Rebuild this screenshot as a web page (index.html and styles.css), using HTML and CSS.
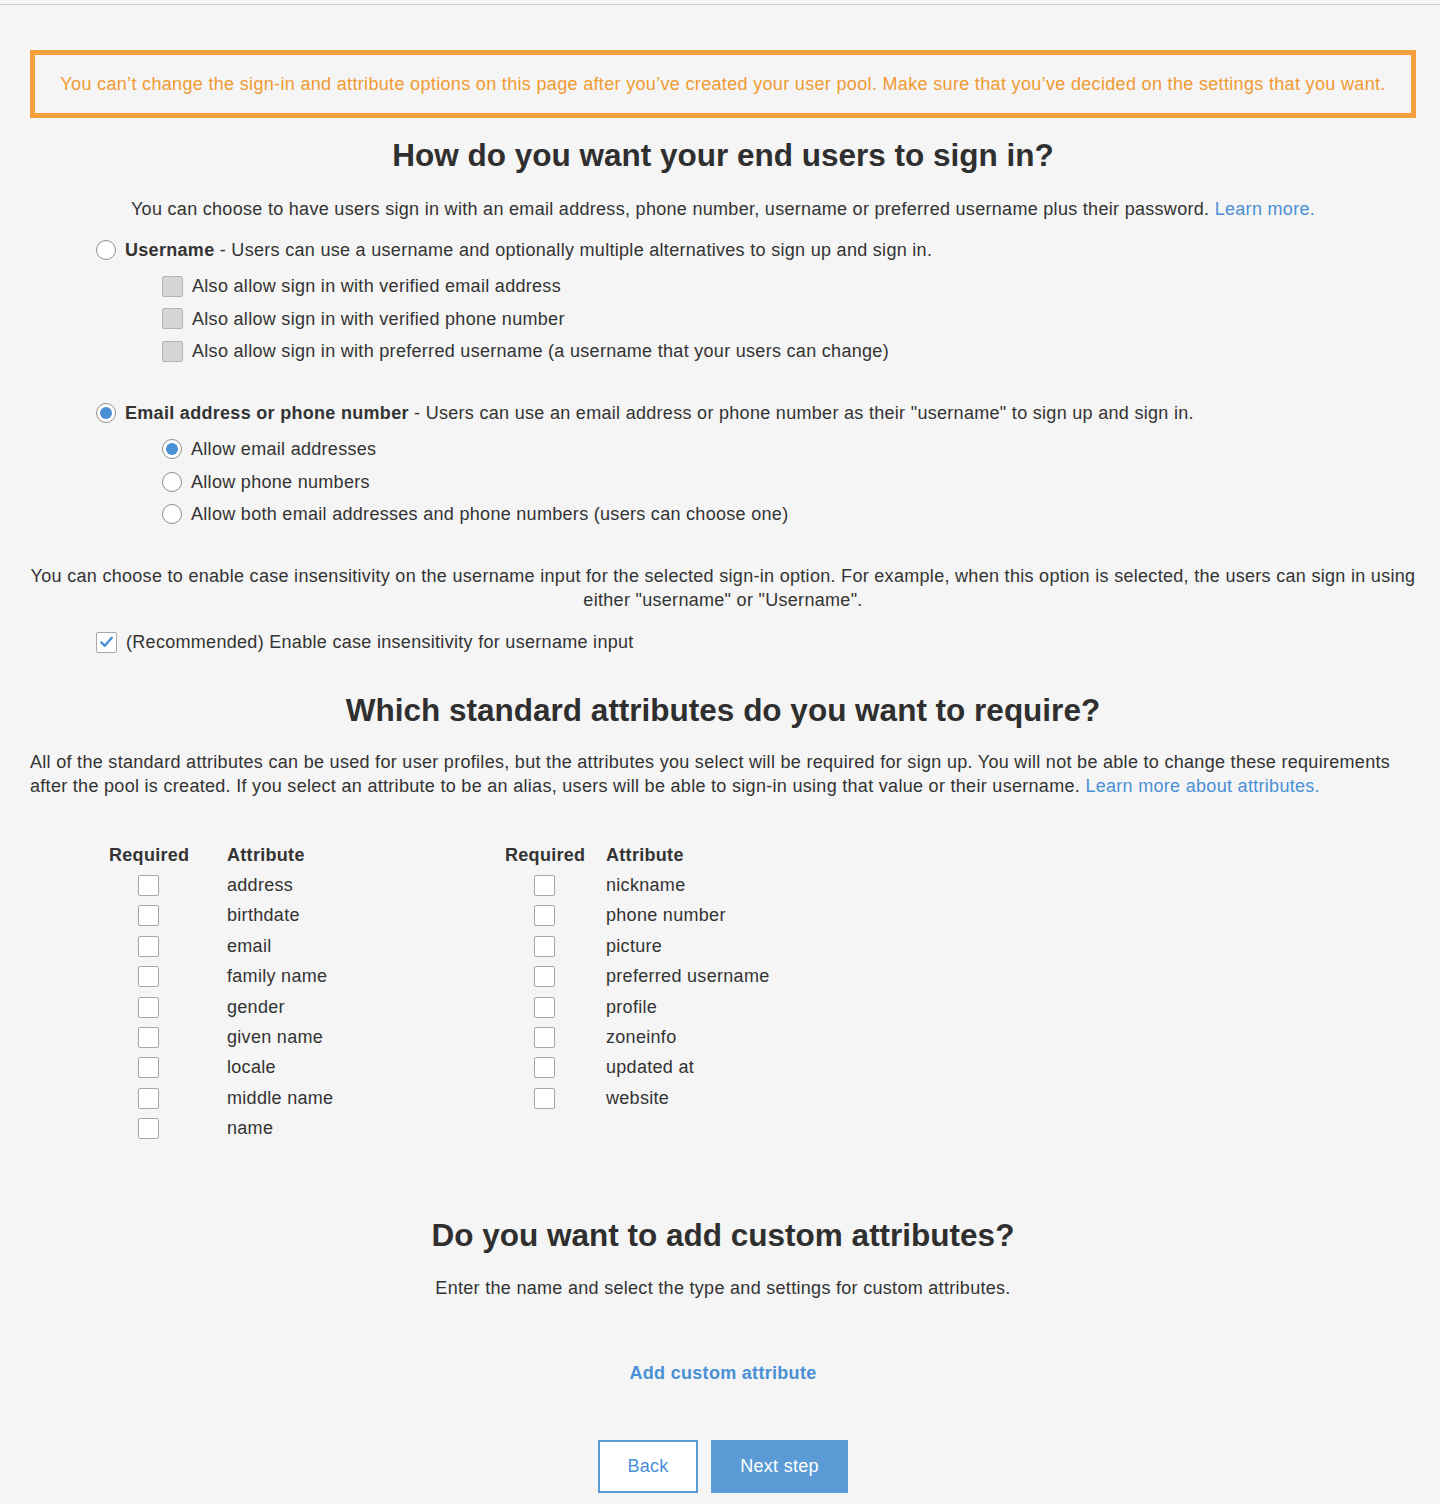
FILE: index.html
```html
<!DOCTYPE html>
<html lang="en">
<head>
<meta charset="utf-8">
<title>Attributes</title>
<link rel="stylesheet" href="styles.css">
</head>
<body>
<div class="topbar"></div>
<main class="page">
  <div class="warning">You can’t change the sign-in and attribute options on this page after you’ve created your user pool. Make sure that you’ve decided on the settings that you want.</div>

  <h2 class="heading h-signin">How do you want your end users to sign in?</h2>
  <p class="intro">You can choose to have users sign in with an email address, phone number, username or preferred username plus their password. <a class="link" href="#">Learn more.</a></p>

  <div class="option opt-username">
    <span class="radio"></span>
    <span><b>Username</b> - Users can use a username and optionally multiple alternatives to sign up and sign in.</span>
  </div>
  <div class="suboptions sub-username">
    <div class="option"><span class="check disabled"></span><span>Also allow sign in with verified email address</span></div>
    <div class="option"><span class="check disabled"></span><span>Also allow sign in with verified phone number</span></div>
    <div class="option"><span class="check disabled"></span><span>Also allow sign in with preferred username (a username that your users can change)</span></div>
  </div>

  <div class="option opt-email">
    <span class="radio checked"></span>
    <span><b>Email address or phone number</b> - Users can use an email address or phone number as their "username" to sign up and sign in.</span>
  </div>
  <div class="suboptions sub-email">
    <div class="option"><span class="radio checked"></span><span>Allow email addresses</span></div>
    <div class="option"><span class="radio"></span><span>Allow phone numbers</span></div>
    <div class="option"><span class="radio"></span><span>Allow both email addresses and phone numbers (users can choose one)</span></div>
  </div>

  <p class="case-text">You can choose to enable case insensitivity on the username input for the selected sign-in option. For example, when this option is selected, the users can sign in using either "username" or "Username".</p>
  <div class="option opt-case">
    <span class="check checked"><svg viewBox="0 0 20 20" width="20" height="20"><path d="M4.5 10.5 L8.2 14 L15.5 5.5" fill="none" stroke="#4a8fd6" stroke-width="2.6" stroke-linecap="round" stroke-linejoin="round"/></svg></span>
    <span>(Recommended) Enable case insensitivity for username input</span>
  </div>

  <h2 class="heading h-attrs">Which standard attributes do you want to require?</h2>
  <p class="attrs-text">All of the standard attributes can be used for user profiles, but the attributes you select will be required for sign up. You will not be able to change these requirements after the pool is created. If you select an attribute to be an alias, users will be able to sign-in using that value or their username. <a class="link" href="#">Learn more about attributes.</a></p>

  <div class="attr-tables">
    <div class="attr-table t1">
      <div class="th">Required</div><div class="th">Attribute</div>
      <div class="cb"><span class="box"></span></div><div class="name">address</div>
      <div class="cb"><span class="box"></span></div><div class="name">birthdate</div>
      <div class="cb"><span class="box"></span></div><div class="name">email</div>
      <div class="cb"><span class="box"></span></div><div class="name">family name</div>
      <div class="cb"><span class="box"></span></div><div class="name">gender</div>
      <div class="cb"><span class="box"></span></div><div class="name">given name</div>
      <div class="cb"><span class="box"></span></div><div class="name">locale</div>
      <div class="cb"><span class="box"></span></div><div class="name">middle name</div>
      <div class="cb"><span class="box"></span></div><div class="name">name</div>
    </div>
    <div class="attr-table t2">
      <div class="th">Required</div><div class="th">Attribute</div>
      <div class="cb"><span class="box"></span></div><div class="name">nickname</div>
      <div class="cb"><span class="box"></span></div><div class="name">phone number</div>
      <div class="cb"><span class="box"></span></div><div class="name">picture</div>
      <div class="cb"><span class="box"></span></div><div class="name">preferred username</div>
      <div class="cb"><span class="box"></span></div><div class="name">profile</div>
      <div class="cb"><span class="box"></span></div><div class="name">zoneinfo</div>
      <div class="cb"><span class="box"></span></div><div class="name">updated at</div>
      <div class="cb"><span class="box"></span></div><div class="name">website</div>
    </div>
  </div>

  <h2 class="heading h-custom">Do you want to add custom attributes?</h2>
  <p class="custom-text">Enter the name and select the type and settings for custom attributes.</p>
  <div class="add-row"><a class="add-link" href="#">Add custom attribute</a></div>

  <div class="actions">
    <button class="btn btn-back" type="button">Back</button>
    <button class="btn btn-next" type="button">Next step</button>
  </div>
</main>
</body>
</html>
```

FILE: styles.css
```css
* { box-sizing: border-box; }

html, body {
  margin: 0;
  padding: 0;
  background: #f4f5f4;
}

body {
  font-family: "Liberation Sans", Arial, sans-serif;
  font-size: 18px;
  letter-spacing: 0.3px;
  color: #333333;
}

.topbar {
  height: 5px;
  border-bottom: 1px solid #cfcfcf;
}

.page {
  width: 1386px;
  margin-left: 30px;
  padding-top: 45px;
  padding-bottom: 11px;
}

.warning {
  border: 5px solid #f5a03b;
  color: #f19a32;
  text-align: center;
  padding: 18px 10px;
  line-height: 22px;
  letter-spacing: 0.33px;
}

.heading {
  margin: 0;
  font-size: 31.5px;
  letter-spacing: 0;
  line-height: 36px;
  font-weight: bold;
  text-align: center;
  color: #2f2f2f;
}

.h-signin { margin-top: 19px; }

p { margin: 0; line-height: 24px; }

.intro {
  margin-top: 24px;
  text-align: center;
}

.link {
  color: #4a90d6;
  text-decoration: none;
}

.option {
  display: flex;
  align-items: center;
  gap: 9px;
  line-height: 24px;
  height: 24px;
}

.opt-username { margin-top: 17px; margin-left: 66px; }
.opt-email { margin-top: 38px; margin-left: 66px; }

.suboptions {
  margin-left: 132px;
  display: flex;
  flex-direction: column;
  gap: 8.5px;
}
.sub-username { margin-top: 12px; }
.sub-email { margin-top: 12px; }

.radio {
  position: relative;
  flex: none;
  width: 20px;
  height: 20px;
  border-radius: 50%;
  border: 1px solid #8e8e8e;
  background: #ffffff;
}
.radio.checked::after {
  content: "";
  position: absolute;
  left: 3px;
  top: 3px;
  width: 12px;
  height: 12px;
  border-radius: 50%;
  background: #4a90d6;
}

.check {
  flex: none;
  width: 21px;
  height: 21px;
  border: 1px solid #a8a8a8;
  border-radius: 2px;
  background: #ffffff;
  display: flex;
  align-items: center;
  justify-content: center;
}
.check.disabled {
  background: #d5d5d5;
  border-color: #b3b3b3;
}
.check svg { display: block; }

.case-text {
  margin-top: 38px;
  text-align: center;
}

.opt-case { margin-top: 18px; margin-left: 66px; }

.h-attrs { margin-top: 38px; }

.attrs-text { margin-top: 22px; }

.attr-tables {
  margin-top: 42px;
  margin-left: 79px;
  display: flex;
}

.attr-table {
  display: grid;
  grid-auto-rows: 30.375px;
  align-items: center;
  align-content: start;
}
.t1 { grid-template-columns: 79px auto; column-gap: 39px; width: 396px; }
.t2 { grid-template-columns: 79px auto; column-gap: 22px; }

.th {
  font-weight: bold;
  white-space: nowrap;
}

.cb {
  display: flex;
  justify-content: center;
}

.box {
  display: block;
  width: 21px;
  height: 21px;
  border: 1px solid #a6a6a6;
  border-radius: 2px;
  background: #ffffff;
}

.h-custom { margin-top: 73px; }

.custom-text {
  margin-top: 23px;
  text-align: center;
}

.add-row {
  margin-top: 61px;
  text-align: center;
  line-height: 24px;
}

.add-link {
  color: #4a90d6;
  font-weight: bold;
  text-decoration: none;
}

.actions {
  margin-top: 55px;
  display: flex;
  justify-content: center;
  gap: 13px;
}

.btn {
  font-family: "Liberation Sans", Arial, sans-serif;
  font-size: 18px;
  letter-spacing: 0.3px;
  height: 53px;
  padding: 0;
  cursor: pointer;
}

.btn-back {
  width: 100px;
  background: #ffffff;
  border: 2px solid #5a9bd5;
  color: #4a90d6;
}

.btn-next {
  width: 137px;
  background: #5b9bd5;
  border: 0;
  color: #ffffff;
}
```
